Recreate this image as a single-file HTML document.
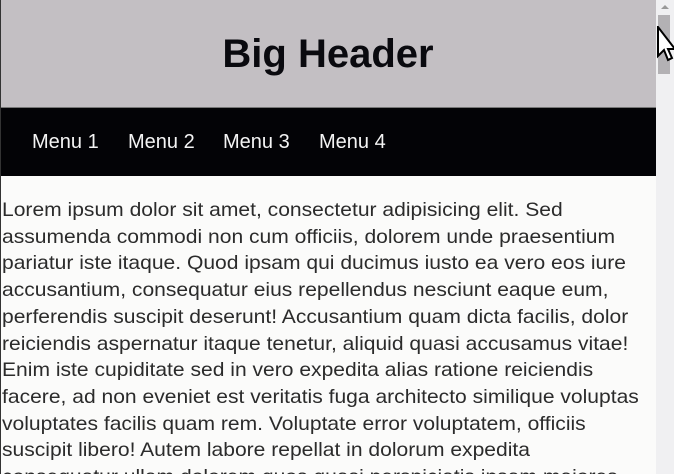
<!DOCTYPE html>
<html><head><meta charset="utf-8"><style>
html,body{margin:0;padding:0;width:674px;height:474px;overflow:hidden;background:#fbfbfa;font-family:"Liberation Sans",sans-serif;}
.hdr{position:absolute;left:0;top:0;width:656px;height:107px;background:#c3bfc3;}
.hdr h1{position:absolute;left:0;width:656px;top:30px;margin:0;text-align:center;font-size:40px;line-height:48px;font-weight:bold;color:#0a0a0f;}
.nav{position:absolute;left:0;top:107px;width:656px;height:68px;background:#030306;border-top:1px solid #777;}
.nav span{position:absolute;top:22px;color:#f4f4f4;font-size:20px;line-height:24px;}
.lb{position:absolute;left:0;top:0;width:1px;height:474px;background:#333;}
.wrap{position:absolute;left:0;top:0;width:656px;height:474px;overflow:hidden;}
.txt{position:absolute;left:2px;top:197px;color:#2b2b2b;font-size:19.5px;line-height:26.7px;transform:scaleX(1.08);transform-origin:0 0;}
.txt div{white-space:nowrap;}
.sb{position:absolute;left:656px;top:0;width:18px;height:474px;background:#f0f0f2;}
.th{position:absolute;left:658px;top:15px;width:12px;height:59px;background:#b3b1b4;}
.ar{position:absolute;left:661px;top:5px;width:0;height:0;border-left:4px solid transparent;border-right:4px solid transparent;border-bottom:4px solid #999;}
</style></head><body>
<div class="hdr"><h1>Big Header</h1></div>
<div class="nav"><span style="left:32px">Menu 1</span><span style="left:128px">Menu 2</span><span style="left:223px">Menu 3</span><span style="left:319px">Menu 4</span></div>
<div class="wrap"><div class="txt">
<div>Lorem ipsum dolor sit amet, consectetur adipisicing elit. Sed</div>
<div>assumenda commodi non cum officiis, dolorem unde praesentium</div>
<div>pariatur iste itaque. Quod ipsam qui ducimus iusto ea vero eos iure</div>
<div>accusantium, consequatur eius repellendus nesciunt eaque eum,</div>
<div>perferendis suscipit deserunt! Accusantium quam dicta facilis, dolor</div>
<div>reiciendis aspernatur itaque tenetur, aliquid quasi accusamus vitae!</div>
<div>Enim iste cupiditate sed in vero expedita alias ratione reiciendis</div>
<div>facere, ad non eveniet est veritatis fuga architecto similique voluptas</div>
<div>voluptates facilis quam rem. Voluptate error voluptatem, officiis</div>
<div>suscipit libero! Autem labore repellat in dolorum expedita</div>
<div>consequatur ullam dolorem quos quasi perspiciatis ipsam maiores</div>
</div></div>
<div class="lb"></div>
<div class="sb"></div><div class="ar"></div><div class="th"></div>
<svg style="position:absolute;left:657px;top:26px" width="17" height="40" viewBox="0 0 17 40"><path d="M1 1 L1 30 L7 24 L11 34 L15 32 L11 23 L18 23 Z" fill="#fff" stroke="#000" stroke-width="2"/></svg>
</body></html>
